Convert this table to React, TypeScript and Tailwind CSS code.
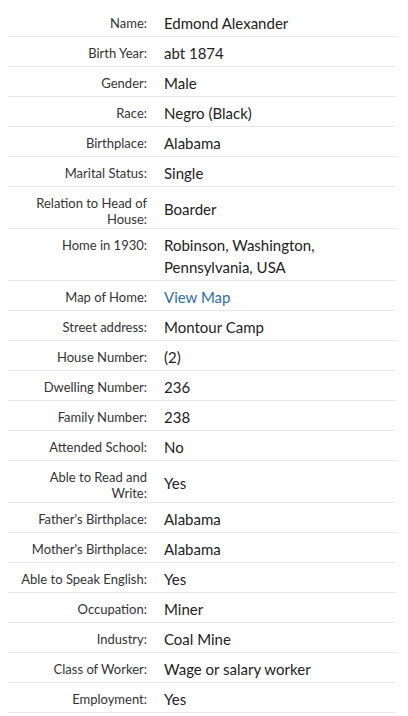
type Row = {
  label: string
  value: string
  link?: boolean
  center?: boolean
}

const rows: Row[] = [
  { label: 'Name:', value: 'Edmond Alexander' },
  { label: 'Birth Year:', value: 'abt 1874' },
  { label: 'Gender:', value: 'Male' },
  { label: 'Race:', value: 'Negro (Black)' },
  { label: 'Birthplace:', value: 'Alabama' },
  { label: 'Marital Status:', value: 'Single' },
  { label: 'Relation to Head of House:', value: 'Boarder', center: true },
  { label: 'Home in 1930:', value: 'Robinson, Washington, Pennsylvania, USA' },
  { label: 'Map of Home:', value: 'View Map', link: true },
  { label: 'Street address:', value: 'Montour Camp' },
  { label: 'House Number:', value: '(2)' },
  { label: 'Dwelling Number:', value: '236' },
  { label: 'Family Number:', value: '238' },
  { label: 'Attended School:', value: 'No' },
  { label: 'Able to Read and Write:', value: 'Yes', center: true },
  { label: "Father's Birthplace:", value: 'Alabama' },
  { label: "Mother's Birthplace:", value: 'Alabama' },
  { label: 'Able to Speak English:', value: 'Yes' },
  { label: 'Occupation:', value: 'Miner' },
  { label: 'Industry:', value: 'Coal Mine' },
  { label: 'Class of Worker:', value: 'Wage or salary worker' },
  { label: 'Employment:', value: 'Yes' },
]

export default function App() {
  return (
    <div className="bg-white pt-[7px] px-2 font-['Lato','Liberation_Sans',sans-serif]">
      <table className="w-[388px]">
        <tbody>
          {rows.map((row) => (
            <tr key={row.label} className="border-b border-[#e8e8e8]">
              <th className="w-[148px] pl-2 pr-[9px] pt-[5px] pb-[1px] text-right align-top text-[13px] leading-[16px] font-normal text-[#333]">
                <div className="mt-[3px]">{row.label}</div>
              </th>
              <td
                className={
                  'pl-2 pt-[5px] pb-[2px] text-[15px] leading-[22px] ' +
                  (row.center ? 'align-middle ' : 'align-top ') +
                  (row.link ? 'text-[#2f6ea8]' : 'text-[#222]')
                }
              >
                {row.link ? <a href="#">{row.value}</a> : row.value}
              </td>
            </tr>
          ))}
        </tbody>
      </table>
    </div>
  )
}
